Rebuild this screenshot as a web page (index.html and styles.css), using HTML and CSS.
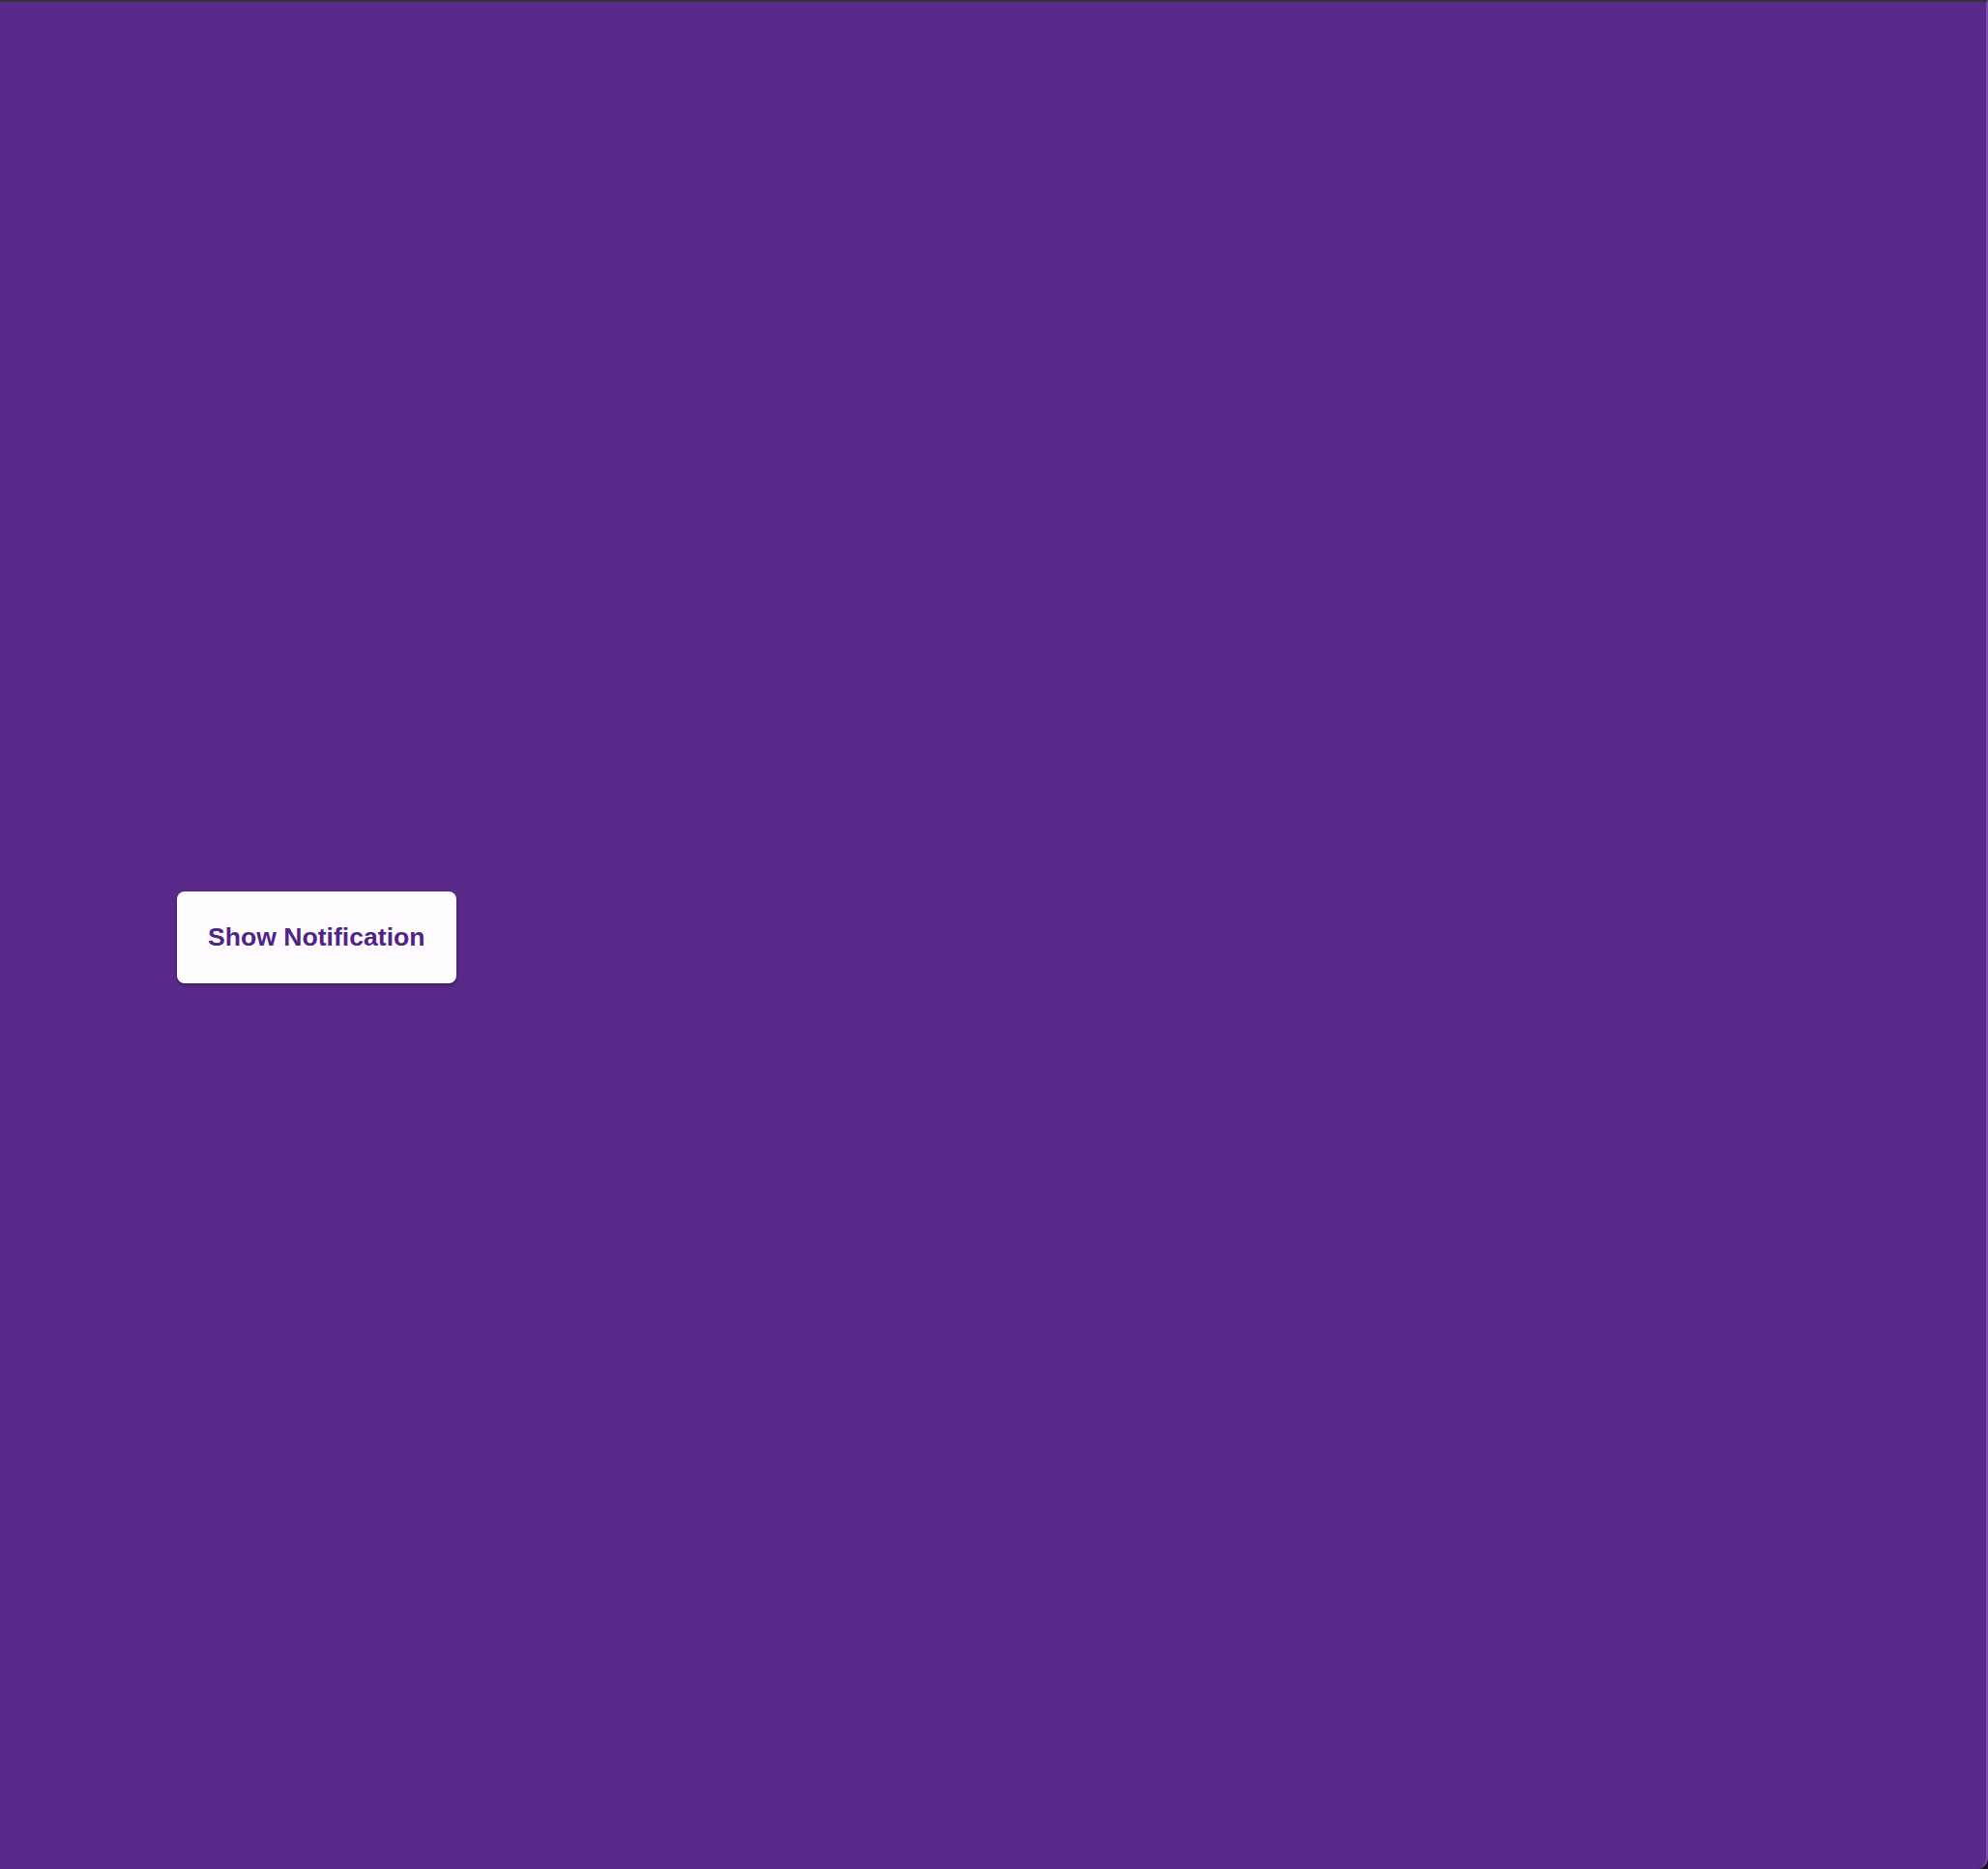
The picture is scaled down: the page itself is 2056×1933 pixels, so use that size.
FILE: index.html
```html
<!DOCTYPE html>
<html lang="en">
<head>
<meta charset="utf-8">
<title>Show Notification</title>
<link rel="stylesheet" href="styles.css">
</head>
<body>
<div class="window">
  <main class="stage">
    <button class="notify-btn" type="button">Show Notification</button>
  </main>
</div>
</body>
</html>
```
FILE: styles.css
```css
html, body {
  margin: 0;
  padding: 0;
  height: 100%;
  background: #1a1024;
}
.window {
  box-sizing: border-box;
  height: 100%;
  background: #5a2a8b;
  border-top: 2px solid #35333a;
  border-right: 2px solid #7a4fb0;
  border-bottom-right-radius: 12px;
  display: flex;
}
.stage {
  flex: 1;
  display: flex;
  align-items: center;
  padding-left: 183px;
  padding-top: 4px;
}
.notify-btn {
  font-family: "Liberation Sans", Arial, sans-serif;
  font-weight: 700;
  font-size: 26.6px;
  line-height: 29px;
  color: #4f2486;
  background: #fefcff;
  border: none;
  border-radius: 8px;
  padding: 33px 32px;
  box-shadow: 0 2px 4px rgba(0, 0, 0, 0.35);
  cursor: pointer;
}
```
